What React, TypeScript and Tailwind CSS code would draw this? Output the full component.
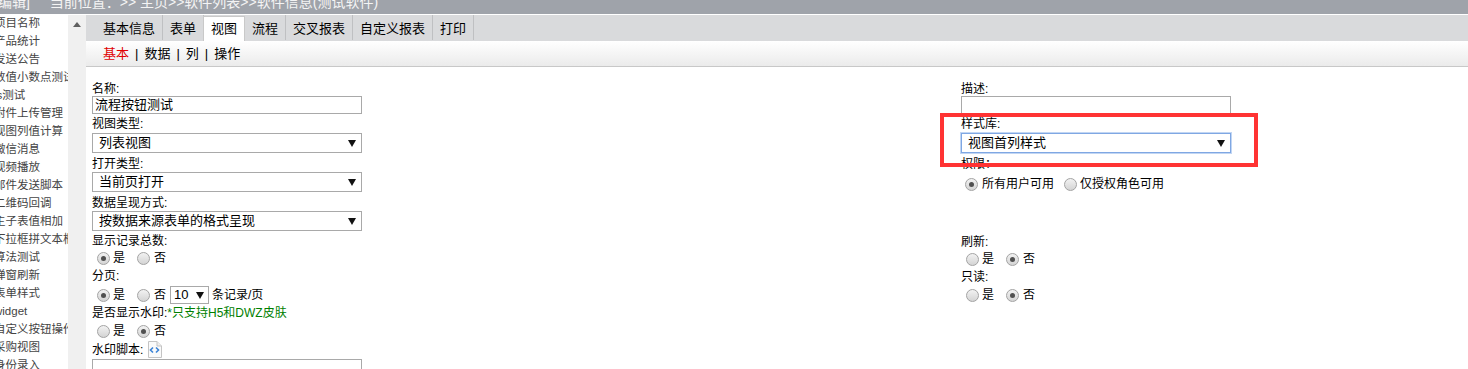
import React from "react";

const sideItems = [
  "项目名称",
  "产品统计",
  "发送公告",
  "数值小数点测试",
  "js测试",
  "附件上传管理",
  "视图列值计算",
  "微信消息",
  "视频播放",
  "邮件发送脚本",
  "二维码回调",
  "主子表值相加",
  "下拉框拼文本框",
  "算法测试",
  "弹窗刷新",
  "表单样式",
  "widget",
  "自定义按钮操作",
  "采购视图",
  "身份录入",
];

const tabs = ["基本信息", "表单", "视图", "流程", "交叉报表", "自定义报表", "打印"];

const Radio = ({ checked }: { checked?: boolean }) => (
  <span className="inline-flex w-[13px] h-[13px] rounded-full border border-[#a3a3a3] bg-linear-to-b from-[#f2f2f2] to-[#d4d4d4] items-center justify-center shrink-0">
    {checked && <span className="w-[5px] h-[5px] rounded-full bg-[#505050]" />}
  </span>
);

const Arrow = () => (
  <svg width="8" height="7" viewBox="0 0 8 7">
    <polygon points="0,0 8,0 4,7" fill="#111" />
  </svg>
);

const Label = ({ children, className = "" }: { children: React.ReactNode; className?: string }) => (
  <div className={`h-[15px] pt-[1px] leading-[15px] text-[12px] text-black whitespace-nowrap shrink-0 ${className}`}>{children}</div>
);

const Select = ({ value, focus, className = "" }: { value: string; focus?: boolean; className?: string }) => (
  <div
    className={`h-[20px] w-[270px] shrink-0 border flex items-center justify-between pl-[6px] pr-[5px] text-[13px] text-black bg-white ${
      focus ? "border-[#7fa7e3] ring-1 ring-[#c2d6f3]" : "border-[#a9a9a9]"
    } ${className}`}
  >
    <span>{value}</span>
    <Arrow />
  </div>
);

const YesNo = ({ yes, className = "", children }: { yes: boolean; className?: string; children?: React.ReactNode }) => (
  <div className={`flex items-center h-[18px] shrink-0 pl-[5px] text-[12px] text-black ${className}`}>
    <Radio checked={yes} />
    <span className="ml-[3px]">是</span>
    <span className="ml-[12px] flex items-center">
      <Radio checked={!yes} />
    </span>
    <span className="ml-[4px]">否</span>
    {children}
  </div>
);

const ScriptIcon = () => (
  <svg width="15" height="17" viewBox="0 0 15 17" className="ml-[4px]">
    <path d="M1.5 0.5 H10 L14.5 5 V16.5 H1.5 Z" fill="#fafafa" stroke="#c4c4c4" />
    <path d="M10 0.5 V5 H14.5" fill="#eee" stroke="#c4c4c4" />
    <path d="M6 6.5 L3.5 9 L6 11.5" fill="none" stroke="#3a83d6" strokeWidth="1.6" />
    <path d="M9 6.5 L11.5 9 L9 11.5" fill="none" stroke="#3a83d6" strokeWidth="1.6" />
  </svg>
);

export default function App() {
  return (
    <div className="w-[1468px] h-[369px] overflow-hidden bg-white font-['Liberation_Sans','Noto_Sans_CJK_SC',sans-serif]">
      <div className="h-[14px] bg-[#9fa3aa] overflow-hidden text-[14px] text-[#f4f4f4] whitespace-nowrap">
        <div className="flex leading-[14px] -mt-[5px]">
          <span className="-ml-[6px]">[编辑]</span>
          <span className="ml-[20px]">当前位置：&gt;&gt; 主页&gt;&gt;软件列表&gt;&gt;软件信息(测试软件)</span>
        </div>
      </div>
      <div className="flex h-[355px] border-t border-white">
        <div className="w-[68px] overflow-hidden shrink-0">
          <div className="-ml-[6px] text-[11.5px] leading-[18px] text-[#444] whitespace-nowrap -mt-[1px]">
            {sideItems.map((s) => (
              <div key={s}>{s}</div>
            ))}
          </div>
        </div>
        <div className="w-[18px] shrink-0 bg-[#f0f0f0] flex justify-center pt-[7px]">
          <svg width="8" height="5" viewBox="0 0 8 5">
            <polygon points="4,0 8,5 0,5" fill="#606060" />
          </svg>
        </div>
        <div className="flex-1 flex flex-col">
          <div className="h-[26px] shrink-0 bg-[#d9dadc] flex items-end pl-[10px] text-[13px] text-black">
            {tabs.map((t) =>
              t === "视图" ? (
                <div key={t} className="h-[25px] px-[7px] bg-white border border-b-0 border-[#c9c9c9] -ml-[1px] flex items-center">
                  {t}
                </div>
              ) : (
                <div key={t} className="h-[25px] px-[7px] border-r border-[#bfc0c2] flex items-center mb-[1px]">
                  <span className="h-[21px] leading-[21px] mt-[2px]">{t}</span>
                </div>
              )
            )}
          </div>
          <div className="h-[26px] shrink-0 bg-linear-to-b from-white to-[#ebebeb] border-b border-[#c8c8c8] flex items-center pl-[17px] text-[13px] text-black">
            <span className="text-[#e00000]">基本</span>
            <span className="mx-[6px]">|</span>
            <span>数据</span>
            <span className="mx-[6px]">|</span>
            <span>列</span>
            <span className="mx-[6px]">|</span>
            <span>操作</span>
          </div>
          <div className="flex shrink-0 pl-[6px] pt-[14px]">
            <div className="w-[869px] flex flex-col">
              <Label>名称:</Label>
              <div className="h-[18px] w-[270px] shrink-0 border border-[#a9a9a9] px-[2px] text-[13px] leading-[16px] text-black">
                流程按钮测试
              </div>
              <Label className="mt-[2px]">视图类型:</Label>
              <Select className="mt-[2px]" value="列表视图" />
              <Label className="mt-[3px]">打开类型:</Label>
              <Select className="mt-[1px]" value="当前页打开" />
              <Label className="mt-[3px]">数据呈现方式:</Label>
              <Select className="mt-[1px]" value="按数据来源表单的格式呈现" />
              <Label className="mt-[2px]">显示记录总数:</Label>
              <YesNo yes className="mt-[1px]" />
              <Label className="mt-[1px]">分页:</Label>
              <YesNo yes className="mt-[2px] h-[20px]">
                <div className="ml-[4px] h-[18px] w-[39px] border border-[#a9a9a9] flex items-center justify-between pl-[3px] pr-[4px] text-[13px]">
                  <span>10</span>
                  <Arrow />
                </div>
                <span className="ml-[3px]">条记录/页</span>
              </YesNo>
              <Label>
                是否显示水印:<span className="text-[#008000]">*只支持H5和DWZ皮肤</span>
              </Label>
              <YesNo yes={false} className="mt-[2px]" />
              <div className="mt-[2px] flex items-center h-[15px] shrink-0 text-[12px] text-black">
                <span>水印脚本:</span>
                <ScriptIcon />
              </div>
              <div className="mt-[2px] h-[40px] w-[270px] shrink-0 border border-[#a9a9a9]" />
            </div>
            <div className="relative flex flex-col">
              <Label>描述:</Label>
              <div className="h-[18px] w-[270px] shrink-0 border border-[#a9a9a9]" />
              <Label className="mt-[2px]">样式库:</Label>
              <Select className="mt-[2px]" value="视图首列样式" focus />
              <Label className="mt-[3px]">权限：</Label>
              <div className="mt-[4px] flex items-center h-[18px] pl-[4px] text-[12px] text-black">
                <Radio checked />
                <span className="ml-[4px]">所有用户可用</span>
                <span className="ml-[10px] flex items-center">
                  <Radio />
                </span>
                <span className="ml-[3px]">仅授权角色可用</span>
              </div>
              <Label className="mt-[41px]">刷新:</Label>
              <YesNo yes={false} className="mt-[1px] pl-[4px]" />
              <Label className="mt-[1px]">只读:</Label>
              <YesNo yes={false} className="mt-[2px] pl-[4px]" />
              <div className="absolute left-[-21px] top-[32px] w-[318px] h-[54px] border-4 border-[#f33]" />
            </div>
          </div>
        </div>
      </div>
    </div>
  );
}
